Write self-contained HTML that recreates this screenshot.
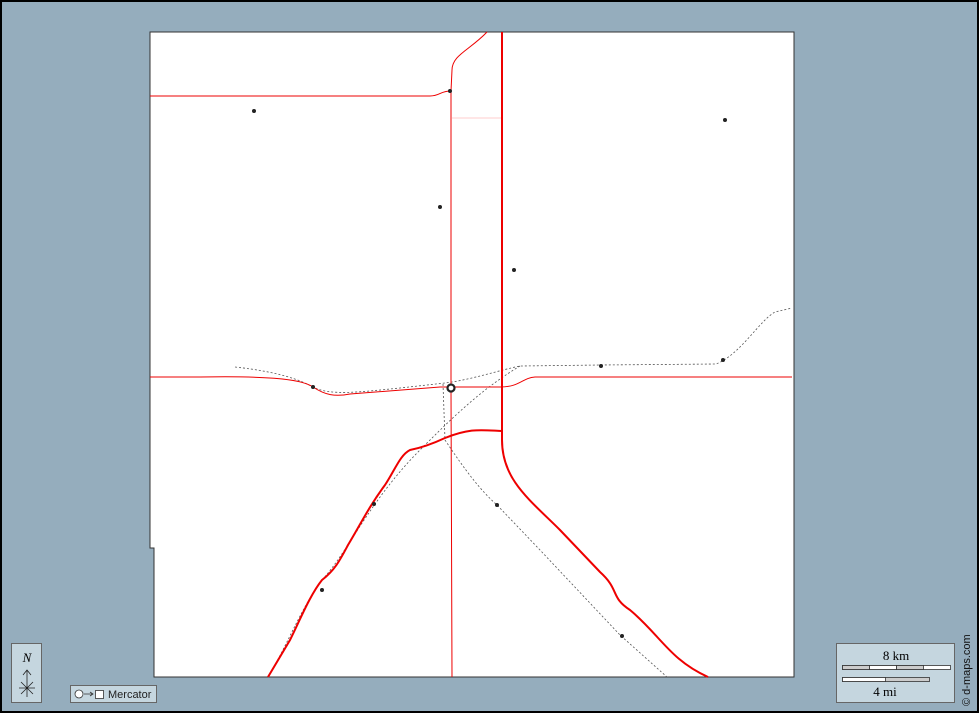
<!DOCTYPE html>
<html><head><meta charset="utf-8"><style>
html,body{margin:0;padding:0;background:#000;}
svg{display:block}
text{font-family:"Liberation Serif",serif}
</style></head><body>
<svg width="979" height="713" viewBox="0 0 979 713" xmlns="http://www.w3.org/2000/svg">
<rect x="0" y="0" width="979" height="713" fill="#000"/>
<rect x="2" y="2" width="975" height="709" fill="#95adbd"/>
<path d="M150,32 L794,32 L794,677 L154,677 L154,548 L150,548 Z" fill="#fff" stroke="#333" stroke-width="1"/>
<g fill="none" stroke="#555" stroke-width="0.8" stroke-dasharray="2,2">
<path d="M235,367 C280,372 300,380 313,387 C330,396 360,392 400,388 L445,383 C470,380 500,370 520,366 L600,365 L716,364 C740,355 760,320 775,312 L792,308"/>
<path d="M443,384 L445,440 C465,470 480,490 497,505 L540,550 L620,635 L667,677"/>
<path d="M520,366 C480,390 450,420 420,450 C400,470 385,490 375,504 C350,540 340,560 322,580 C300,610 290,640 268,677"/>
</g>
<g fill="none" stroke="#e00" stroke-width="1">
<path d="M150,96 L300,96 L430,96 C440,96 440,91 451,91"/>
<path d="M487,32 C470,50 452,55 452,70 L451,91 L451,388 L452,677"/>
<path d="M150,377 L200,377 C260,376 300,378 313,387 C325,395 335,397 350,394 L440,387 L500,387 C520,387 522,378 535,377 L700,377 L792,377"/>
<path d="M452,118 L501,118" stroke="#f99" stroke-width="0.6"/>
</g>
<g fill="none" stroke="#e00" stroke-width="2">
<path d="M502,32 L502,440 C502,480 530,500 560,530 L600,572 C620,590 610,597 630,610 C660,635 670,660 708,677"/>
<path d="M502,431 C480,430 470,428 445,438 C430,445 420,448 410,450 C400,455 395,470 385,485 C370,505 360,525 348,545 C340,560 335,570 322,580 C310,595 300,620 290,640 L268,677"/>
</g>
<g fill="#222">
<circle cx="254" cy="111" r="2"/><circle cx="450" cy="91" r="2"/><circle cx="725" cy="120" r="2"/>
<circle cx="440" cy="207" r="2"/><circle cx="514" cy="270" r="2"/><circle cx="601" cy="366" r="2"/>
<circle cx="723" cy="360" r="2"/><circle cx="313" cy="387" r="2"/><circle cx="374" cy="504" r="2"/>
<circle cx="497" cy="505" r="2"/><circle cx="322" cy="590" r="2"/><circle cx="622" cy="636" r="2"/>
</g>
<circle cx="451" cy="388" r="3.5" fill="#fff" stroke="#222" stroke-width="2.2"/>
<rect x="11.5" y="643.5" width="30" height="59" fill="#c5d6df" stroke="#666"/>
<text x="27" y="662" font-size="13" font-style="italic" text-anchor="middle">N</text>
<path d="M27,670 L27,697 M23,675 L27,670 L31,675 M19,688 L35,688 M21,682 L33,694 M33,682 L21,694" stroke="#222" stroke-width="0.8" fill="none"/>
<rect x="70.5" y="685.5" width="86" height="17" fill="#c5d6df" stroke="#666"/>
<circle cx="79" cy="694" r="4" fill="#fff" stroke="#333" stroke-width="0.8"/>
<path d="M84,694 L93,694 M90,692 L93,694 L90,696" stroke="#333" stroke-width="0.8" fill="none"/>
<rect x="95.5" y="690.5" width="8" height="8" fill="#fff" stroke="#333" stroke-width="0.8"/>
<text x="108" y="698" font-size="11" font-family="Liberation Sans,sans-serif" style="font-family:'Liberation Sans',sans-serif" fill="#222">Mercator</text>
<rect x="836.5" y="643.5" width="118" height="59" fill="#c5d6df" stroke="#666"/>
<text x="896" y="660" font-size="13" text-anchor="middle">8 km</text>
<rect x="842.5" y="665.5" width="108" height="4" fill="#fff" stroke="#333" stroke-width="0.8"/>
<rect x="869.5" y="665.5" width="27" height="4" fill="#fff" stroke="#333" stroke-width="0.8"/>
<rect x="842.5" y="665.5" width="27" height="4" fill="#ccc" stroke="#333" stroke-width="0.8"/>
<rect x="896.5" y="665.5" width="27" height="4" fill="#ccc" stroke="#333" stroke-width="0.8"/>
<rect x="842.5" y="677.5" width="87" height="4" fill="#ccc" stroke="#333" stroke-width="0.8"/>
<rect x="842.5" y="677.5" width="43" height="4" fill="#fff" stroke="#333" stroke-width="0.8"/>
<text x="885" y="696" font-size="13" text-anchor="middle">4 mi</text>
<text x="970" y="706" font-size="11" transform="rotate(-90 970 706)" style="font-family:'Liberation Sans',sans-serif" fill="#111">© d-maps.com</text>
</svg>
</body></html>
